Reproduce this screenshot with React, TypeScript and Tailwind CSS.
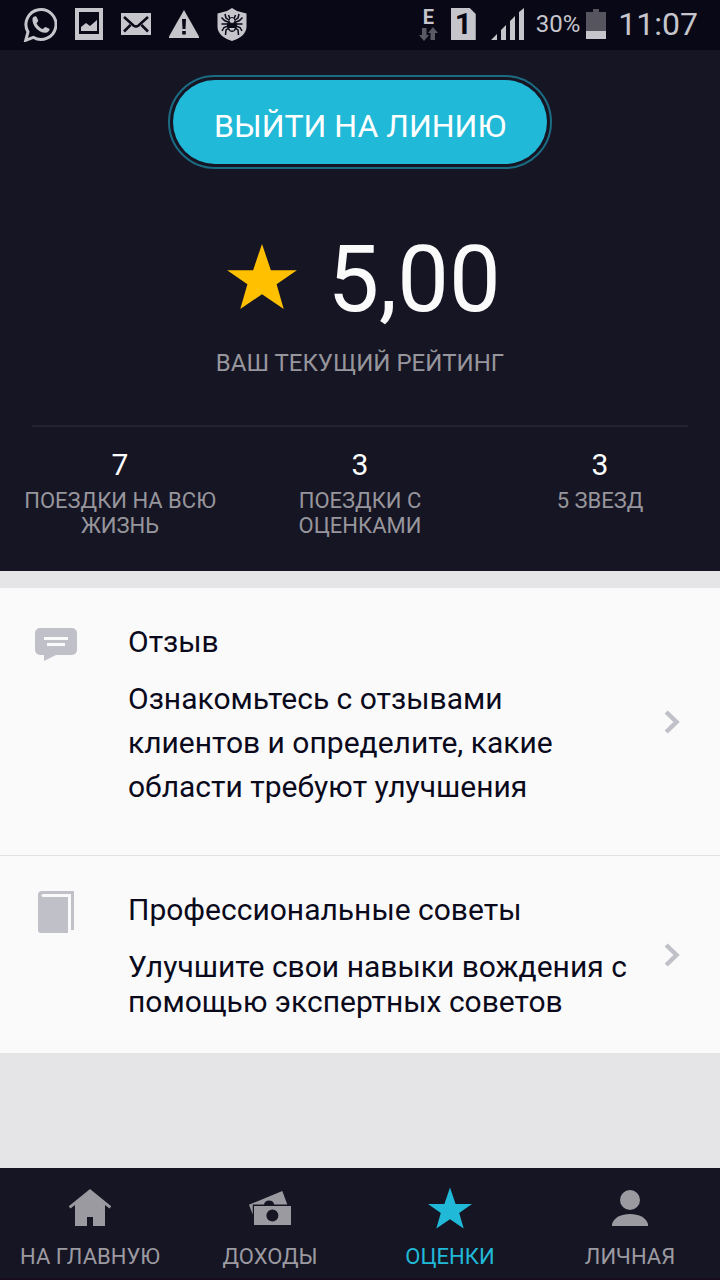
import React from 'react';

interface IconProps {
    className?: string;
}

const StarIcon: React.FC<IconProps> = ({ className }) => (
    <svg viewBox="0 0 44 41" className={className} fill="currentColor" aria-hidden="true">
        <path d="M22 0 27.600 16.500H44L31.200 25.400 35.700 41 22 31.700 8.300 41 12.800 25.400 0 16.500H16.400Z" />
    </svg>
);

const HomeIcon: React.FC<IconProps> = ({ className }) => (
    <svg viewBox="0 0 44 44" className={className} fill="currentColor" aria-hidden="true">
        <path d="M22 3 43.2 20.2 41.6 22.4 37 19V40H25V31H19V40H7V19L2.4 22.4.8 20.2Z" />
    </svg>
);

const MoneyIcon: React.FC<IconProps> = ({ className }) => (
    <svg viewBox="0 0 44 44" className={className} fill="currentColor" aria-hidden="true">
        <path d="M1 18.7 34.3 5 39.3 18.6H26.2A5.2 5.2 0 0 0 16 18.6H4.7V28.6Z" />
        <path fillRule="evenodd" d="M6 20H43V39H6ZM24.4 23.5A6 6 0 1 0 24.4 35.5 6 6 0 1 0 24.4 23.5Z" />
    </svg>
);

const PersonIcon: React.FC<IconProps> = ({ className }) => (
    <svg viewBox="0 0 44 44" className={className} fill="currentColor" aria-hidden="true">
        <circle cx="22" cy="14" r="10" />
        <path d="M4 40V38C6 31.500 13 28 22 28S38 31.500 40 38V40Z" />
    </svg>
);

const CommentIcon: React.FC = () => (
    <svg viewBox="0 0 42 33" className="h-[33px] w-[42px]" aria-hidden="true">
        <path d="M5 0H37A5 5 0 0 1 42 5V22A5 5 0 0 1 37 27H21L9 33V27H5A5 5 0 0 1 0 22V5A5 5 0 0 1 5 0Z" fill="#c0c0c8" />
        <path d="M9 9H33V12H9ZM12 15H30V18H12Z" fill="#fafafa" />
    </svg>
);

const BookIcon: React.FC = () => (
    <svg viewBox="0 0 36 42" className="h-[42px] w-9" fill="#c0c0c8" aria-hidden="true">
        <path d="M4 0H36V39H33V3H5C3 3 3 6 5 6H30V42H3A3 3 0 0 1 0 39V4A4 4 0 0 1 4 0Z" />
    </svg>
);

const ChevronIcon: React.FC = () => (
    <svg viewBox="0 0 16 24" className="h-6 w-4 shrink-0" fill="none" stroke="#c0c0c8" strokeWidth="4.500" aria-hidden="true">
        <path d="M2.200 2 12.500 12 2.200 22" />
    </svg>
);

const StatusBar: React.FC = () => (
    <div className="flex h-[50px] items-center justify-between bg-[#090817] pr-[22px] pb-0.5 pl-[23px] text-[#c6c5cb]">
        <div className="flex items-center gap-[18px]">
            <svg viewBox="0 0 34 36" className="h-9 w-[34px]" aria-hidden="true">
                <path d="M2.700 34.300 5 26A15 15 0 1 1 10.200 31.300Z" fill="none" stroke="currentColor" strokeWidth="3" />
                <path
                    d="M9.500 12.500C10.200 10.200 13 9.600 13.600 10.900L15.200 14.500C15.500 15.500 13.700 16.800 13.600 17.400 14.800 20 17 21.900 19.700 23 20.500 22.800 21.800 20.800 22.600 21L26.300 22.700C27.300 23.500 25.500 26.500 22.800 26.700 16 27.200 8.600 19.500 9.500 12.500Z"
                    fill="currentColor"
                />
            </svg>
            <svg viewBox="0 0 28 32" className="h-8 w-7" fill="currentColor" aria-hidden="true">
                <path fillRule="evenodd" d="M0 0H28V32H0ZM4 4V26H24V4Z" />
                <path d="M6 23V19L11 15 15 18 22 12V23Z" />
            </svg>
            <svg viewBox="0 0 30 22" className="h-[22px] w-[30px]" aria-hidden="true">
                <path d="M0 0H30V22H0Z" fill="currentColor" />
                <path d="M3 4 12.500 12.500Q15 14.500 17.500 12.500L27 4M3 18.500 9.500 12M27 18.500 20.500 12" fill="none" stroke="#090817" strokeWidth="2.500" />
            </svg>
            <svg viewBox="0 0 30 28" className="h-7 w-[30px]" aria-hidden="true">
                <path d="M15 0 30 26.500V28H0V26.500Z" fill="currentColor" />
                <path d="M13 9H17L16.500 19H13.500ZM13.200 21H16.800V24.500H13.200Z" fill="#090817" />
            </svg>
            <svg viewBox="0 0 30 33" className="h-[33px] w-[30px]" aria-hidden="true">
                <path d="M15 0 20 3 29.500 5.500V19C29.500 26 22 31 15 33 8 31 .5 26 .5 19V5.500L10 3Z" fill="currentColor" />
                <g fill="none" stroke="#090817" strokeWidth="1.500">
                    <path d="M12 12 9 10 8 6M11 14 7.500 12.500 4.500 9.500M11 16H4.500M11 18 7 19.500 5 23M12 20 9 22 8.500 27M18 12 21 10 22 6M19 14 22.500 12.500 25.500 9.500M19 16H25.500M19 18 23 19.500 25 23M18 20 21 22 21.500 27" />
                    <path d="M13 11 11.500 7M17 11 18.500 7" />
                </g>
                <ellipse cx="15" cy="17.500" rx="5" ry="6.500" fill="#090817" />
                <circle cx="15" cy="12.500" r="3" fill="currentColor" stroke="#090817" />
                <path d="M12 20H18L16.500 22.500H13.500ZM14.300 11.500H15.700V14H14.300Z" fill="currentColor" />
            </svg>
        </div>

        <div className="flex items-center">
            <div className="flex flex-col items-center">
                <span className="text-[20px] leading-[18px] font-bold">E</span>
                <svg viewBox="0 0 19 14" className="mt-px h-3.5 w-[19px]" fill="#5a5a64" aria-hidden="true">
                    <path d="M3 1H7.500V8H10L5 14 0 8H3ZM11.500 13H16V6H19L14 0 9 6H11.500Z" />
                </svg>
            </div>
            <span className="ml-[13px] h-8 w-[25px] bg-[#c6c5cb] text-center text-[30px] leading-8 font-bold text-[#090817] [clip-path:polygon(0_0,76%_0,100%_19%,100%_100%,0_100%)]">
                1
            </span>
            <svg viewBox="0 0 33 32" className="ml-[15px] h-8 w-[33px]" fill="currentColor" aria-hidden="true">
                <path d="M0 32 6 26V32ZM10 32V22L15 17V32ZM19 32V13L24 8V32ZM28 32V4L33 0V32Z" />
            </svg>
            <span className="ml-3 text-[24px] leading-8">30%</span>
            <svg viewBox="0 0 20 30" className="ml-1.5 h-[30px] w-5" aria-hidden="true">
                <path d="M7 0H13V3H20V22H0V3H7Z" fill="#55545f" />
                <path d="M0 22H20V30H0Z" fill="currentColor" />
            </svg>
            <span className="ml-3 text-[32px] leading-10">11:07</span>
        </div>
    </div>
);

const stats = [
    { value: '7', label: 'ПОЕЗДКИ НА ВСЮ ЖИЗНЬ' },
    { value: '3', label: 'ПОЕЗДКИ С ОЦЕНКАМИ' },
    { value: '3', label: '5 ЗВЕЗД' },
];

const RatingPanel: React.FC = () => (
    <header className="bg-[#161524] pt-[25px] pb-[33px]">
        <div className="mx-auto w-96 rounded-full border-2 border-[#1b6c82] p-[3px]">
            <button className="h-[84px] w-full rounded-full bg-[#20b9d8] pt-2 text-[32px] leading-10 text-white">
                ВЫЙТИ НА ЛИНИЮ
            </button>
        </div>

        <div className="mt-[63px] flex items-center justify-center gap-[30px] pl-2">
            <StarIcon className="mb-[7px] h-[65px] w-[70px] text-[#ffc000]" />
            <span className="text-[92px] leading-[96px] text-[#fafafa]">5,00</span>
        </div>
        <p className="mt-[19px] text-center text-[24px] leading-8 text-[#97969c]">ВАШ ТЕКУЩИЙ РЕЙТИНГ</p>

        <hr className="mx-8 mt-[46px] border-t-2 border-[#232230]" />

        <dl className="mt-[18px] grid grid-cols-3 text-center">
            {stats.map((stat) => (
                <div key={stat.label} className="flex flex-col-reverse justify-end gap-[3px] px-5">
                    <dt className="text-[22px] leading-[25px] text-[#97969c]">{stat.label}</dt>
                    <dd className="text-[30px] leading-10 text-white">{stat.value}</dd>
                </div>
            ))}
        </dl>
    </header>
);

interface LinkRowProps {
    icon: React.ReactNode;
    title: string;
    children: React.ReactNode;
}

const LinkRow: React.FC<LinkRowProps> = ({ icon, title, children }) => (
    <a href="#" className="flex items-center pr-10 text-[30px] text-[#0a0a1c]">
        <span className="mt-[34px] flex h-11 w-28 shrink-0 items-center justify-center self-start">{icon}</span>
        <span className="flex-1 pt-[34px] pr-7 pl-4">
            <span className="block leading-10">{title}</span>
            {children}
        </span>
        <ChevronIcon />
    </a>
);

const tabs = [
    { label: 'НА ГЛАВНУЮ', icon: <HomeIcon className="size-11" />, active: false },
    { label: 'ДОХОДЫ', icon: <MoneyIcon className="size-11" />, active: false },
    { label: 'ОЦЕНКИ', icon: <StarIcon className="size-11" />, active: true },
    { label: 'ЛИЧНАЯ', icon: <PersonIcon className="size-11" />, active: false },
];

const TabBar: React.FC = () => (
    <nav className="mt-auto grid grid-cols-4 border-b-2 border-[#170d1c] bg-[#161524] pt-[18px] pb-[7px]">
        {tabs.map((tab) => (
            <a
                key={tab.label}
                href="#"
                aria-current={tab.active ? 'page' : undefined}
                className={`flex flex-col items-center gap-[13px] ${tab.active ? 'text-[#20b9d8]' : 'text-[#9b9aa0]'}`}
            >
                {tab.icon}
                <span className="text-[22px] leading-7">{tab.label}</span>
            </a>
        ))}
    </nav>
);

export default function App() {
    return (
        <div className="flex min-h-screen flex-col bg-[#e5e5e7] font-['Roboto',sans-serif]">
            <StatusBar />
            <RatingPanel />

            <main className="mt-[17px] divide-y divide-[#e2e2e4] bg-[#fafafa]">
                <LinkRow icon={<CommentIcon />} title="Отзыв">
                    <span className="mt-[15px] mb-[46px] block leading-[44px]">
                        Ознакомьтесь с отзывами клиентов и определите, какие области требуют улучшения
                    </span>
                </LinkRow>
                <LinkRow icon={<BookIcon />} title="Профессиональные советы">
                    <span className="mt-[19px] mb-[34px] block leading-[35px]">
                        Улучшите свои навыки вождения с помощью экспертных советов
                    </span>
                </LinkRow>
            </main>

            <TabBar />
        </div>
    );
}
